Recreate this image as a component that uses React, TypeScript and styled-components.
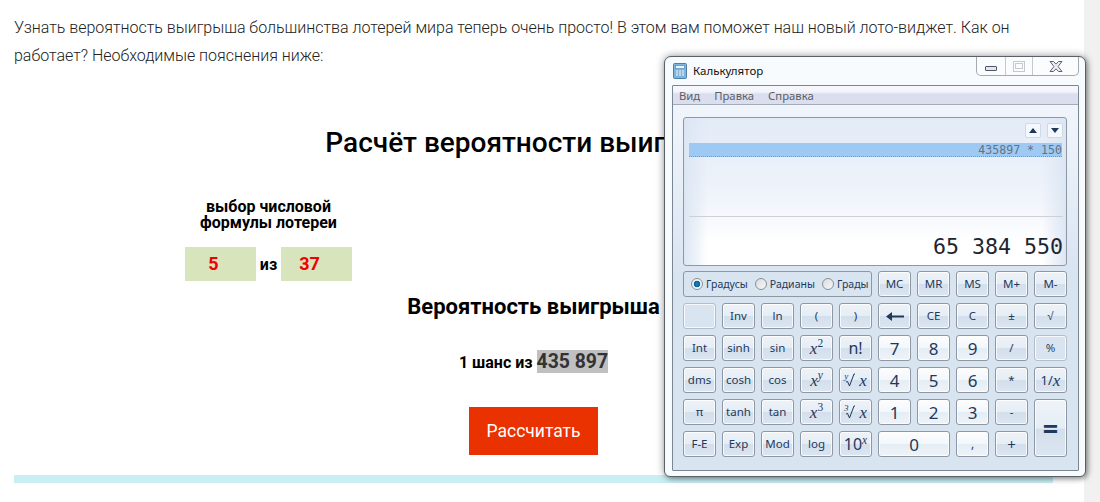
import React from 'react';
import styled, { createGlobalStyle } from 'styled-components';

const GlobalStyle = createGlobalStyle`
  html, body {
    margin: 0;
    padding: 0;
    height: 502px;
    overflow: hidden;
    background: #fff;
  }
  * {
    box-sizing: border-box;
  }
`;

const Shell = styled.div`
  position: relative;
  display: flex;
  width: 1100px;
  height: 502px;
  overflow: hidden;
`;

const Page = styled.main`
  width: 1084px;
  padding: 14px 31px 0 14px;
  font-family: Roboto, sans-serif;
  color: #000;
`;

const Track = styled.div`
  width: 16px;
  background: #f1f1f1;
`;

const Intro = styled.p`
  margin: 0;
  font-size: 16px;
  font-weight: 300;
  letter-spacing: -0.015px;
  line-height: 28px;
  color: #222;
`;

const Heading = styled.h2`
  margin: 57px 0 0;
  font-size: 28px;
  font-weight: 500;
  line-height: 32px;
  text-align: center;
  white-space: nowrap;
`;

const Formula = styled.section`
  margin: 40px 0 0 171px;
  width: 167px;
`;

const FormulaLabel = styled.div`
  font-size: 16px;
  font-weight: 700;
  line-height: 16px;
  text-align: center;
`;

const FormulaRow = styled.div`
  display: flex;
  align-items: center;
  justify-content: space-between;
  margin-top: 16px;
  font-size: 16px;
  font-weight: 700;
`;

const NumberBox = styled.div`
  width: 71px;
  height: 34px;
  padding-right: 14px;
  background: #d7e4bc;
  color: #f00000;
  font-size: 18px;
  font-weight: 700;
  line-height: 33px;
  text-align: center;
`;

const ResultTitle = styled.h3`
  margin: 13px 0 0;
  font-size: 22px;
  font-weight: 700;
  line-height: 26px;
  text-align: center;
  white-space: nowrap;
`;

const Chance = styled.div`
  margin-top: 30px;
  font-size: 16px;
  font-weight: 700;
  line-height: 23px;
  text-align: center;
`;

const ChanceValue = styled.span`
  display: inline-block;
  background: #c0c0c0;
  color: #333;
  font-size: 19.4px;
`;

const SubmitRow = styled.div`
  display: flex;
  justify-content: center;
  margin-top: 33px;
`;

const Submit = styled.button`
  width: 129px;
  height: 48px;
  padding: 0;
  border: 0;
  background: #ea3200;
  color: #fff;
  font-family: Roboto, sans-serif;
  font-size: 17.5px;
`;

const Divider = styled.div`
  height: 8px;
  margin-top: 20px;
  background: #c9eff4;
`;

const Calculator = styled.div`
  position: absolute;
  left: 664px;
  top: 56px;
  width: 422px;
  height: 421px;
  padding: 0 6px 6px 7px;
  border: 1px solid #5a6068;
  border-radius: 7px 7px 6px 6px;
  background: #f8fbfd;
  box-shadow: 0 0 9px rgba(0, 0, 0, 0.4), 2px 2px 4px rgba(0, 0, 0, 0.25);
  font-family: 'Noto Sans', sans-serif;
`;

const TitleBar = styled.div`
  display: flex;
  align-items: flex-start;
  height: 28px;
`;

const AppIcon = styled.svg`
  width: 14px;
  height: 16px;
  margin: 6px 0 0 1px;
`;

const Caption = styled.span`
  margin: 5px 0 0 6px;
  font-size: 11.5px;
  line-height: 17px;
  color: #111;
`;

const WinButtons = styled.div`
  display: flex;
  margin-left: auto;
  height: 19px;
  border: 1px solid #a4aab2;
  border-top: 0;
  border-radius: 0 0 5px 5px;
  background: #fbfcfd;
`;

const WinButton = styled.div<{ $width: number }>`
  display: flex;
  align-items: center;
  justify-content: center;
  width: ${(p) => p.$width}px;
  & + & {
    border-left: 1px solid #c4c8cd;
  }
`;

const MinGlyph = styled.div`
  width: 12px;
  height: 5px;
  margin-top: 4px;
  border: 1px solid #50566a;
  border-radius: 1px;
  background: #e4e7f0;
`;

const MaxGlyph = styled.div`
  display: flex;
  align-items: center;
  justify-content: center;
  width: 12px;
  height: 11px;
  border: 1px solid #c6cacf;
  &::after {
    content: '';
    width: 6px;
    height: 4px;
    border: 1px solid #c6cacf;
  }
`;

const Panel = styled.div`
  display: flex;
  flex-direction: column;
  height: 386px;
  border: 1px solid #7c8692;
  border-radius: 1px;
  background: linear-gradient(180deg, #f0f4fb 18px, #eff4fb 40px, #d9e4f1 190px);
`;

const MenuBar = styled.nav`
  display: flex;
  gap: 14px;
  height: 19px;
  padding: 1px 0 0 6px;
  border-bottom: 1px solid #a3abb6;
  background: linear-gradient(180deg, #f7f8fc 0, #f2f4fa 6px, #dadeee 8px, #dadeee 100%);
  font-size: 11.3px;
  line-height: 17px;
  color: #5a5f66;
`;

const Body = styled.div`
  display: flex;
  flex-direction: column;
  gap: 5px;
  padding: 12px 11px 0 10px;
`;

const Display = styled.div`
  display: flex;
  flex-direction: column;
  height: 149px;
  padding: 5px 3px 0 5px;
  border: 1px solid #8e98a4;
  border-radius: 3px;
  background:
    linear-gradient(90deg, #dce6f3 0, rgba(255, 255, 255, 0) 24px, rgba(255, 255, 255, 0) calc(100% - 24px), #dce6f3 100%),
    linear-gradient(180deg, #e3ebf7 0, #f0f4fb 55%, #fff 85%);
`;

const ScrollArrows = styled.div`
  display: flex;
  justify-content: flex-end;
  gap: 6px;
`;

const ScrollArrow = styled.div`
  display: flex;
  align-items: center;
  justify-content: center;
  width: 16px;
  height: 15px;
  border: 1px solid #cfd8e5;
  border-radius: 2px;
  background: #f5f8fc;
`;

const History = styled.div`
  flex: 0 0 74px;
  margin-top: 5px;
  border-bottom: 1px solid #cdd0d5;
`;

const HistoryLine = styled.div`
  height: 14px;
  margin-right: 1px;
  border-bottom: 1px dotted #7e98b4;
  background: #9dc9f3;
  font-family: 'DejaVu Sans Mono', monospace;
  font-size: 11.6px;
  line-height: 14px;
  color: #667280;
  text-align: right;
`;

const ResultValue = styled.div`
  margin-top: 17px;
  font-family: 'DejaVu Sans Mono', monospace;
  font-size: 21.6px;
  line-height: 26px;
  color: #1d2530;
  text-align: right;
  white-space: pre;
`;

const Keypad = styled.div`
  display: grid;
  grid-template-columns: repeat(10, 33px);
  grid-auto-rows: 26px;
  column-gap: 6px;
  row-gap: 6px;
`;

const RadioGroup = styled.div`
  grid-column: span 5;
  display: flex;
  align-items: center;
  gap: 3px;
  padding-left: 7px;
  border: 1px solid #8e98a4;
  border-radius: 3px;
  font-size: 10.5px;
  color: #1e395b;
`;

const RadioLabel = styled.span`
  margin-right: 4px;
`;

const Radio = styled.span<{ $checked?: boolean }>`
  flex: none;
  width: 12px;
  height: 12px;
  border: 1px solid #8b8f96;
  border-radius: 50%;
  background: ${(p) =>
    p.$checked
      ? 'radial-gradient(circle, #1a86c8 0, #0f5f96 3px, #f0f3f7 3.6px)'
      : 'linear-gradient(135deg, #d9dce0, #f6f7f8)'};
`;

const KeyBase = styled.button<{
  $tone?: 'fn' | 'digit' | 'off';
  $span?: number;
  $tall?: boolean;
  $size?: number;
}>`
  display: flex;
  align-items: center;
  justify-content: center;
  padding: 0;
  border: 1px solid ${(p) => (p.$tone === 'off' ? '#b4bdc8' : '#8e98a4')};
  border-radius: 3px;
  grid-column: span ${(p) => p.$span ?? 1};
  grid-row: span ${(p) => (p.$tall ? 2 : 1)};
  box-shadow: inset 0 0 0 1px rgba(255, 255, 255, 0.75);
  background: ${(p) =>
    p.$tone === 'digit'
      ? 'linear-gradient(180deg, #fcfdfe 0, #f3f7fb 50%, #e5edf5 52%, #eef3f8 100%)'
      : p.$tone === 'off'
        ? '#d9e4f1'
        : 'linear-gradient(180deg, #eef3f9 0, #e6edf5 50%, #d3dfec 52%, #dce6f1 100%)'};
  font-family: 'Noto Sans', sans-serif;
  font-size: ${(p) => p.$size ?? (p.$tone === 'digit' ? 17 : 11.5)}px;
  color: ${(p) => (p.$tone === 'off' ? '#2d4664' : '#1e395b')};
  line-height: 1;
  white-space: nowrap;
`;

const MathText = styled.span`
  font-family: 'Liberation Serif', serif;
  font-size: 17px;
  font-style: italic;
  color: #1e395b;
`;

const Exponent = styled.sup<{ $upright?: boolean }>`
  font-family: 'Liberation Serif', serif;
  font-size: 11.5px;
  font-style: ${(p) => (p.$upright ? 'normal' : 'italic')};
  line-height: 0;
`;

const RootGroup = styled.span`
  display: inline-flex;
  align-items: center;
  gap: 4px;
`;

const RootSign = styled.span`
  display: inline-flex;
  align-items: flex-start;
`;

const RootIndex = styled.span`
  margin-top: -1px;
  font-family: 'Liberation Serif', serif;
  font-size: 9px;
  font-style: italic;
  line-height: 9px;
  color: #1e395b;
`;

const RadicalIcon = styled.svg`
  width: 9px;
  height: 14px;
  margin-left: -2px;
`;

const Equals = styled.span`
  font-size: 27px;
  font-weight: 700;
`;

const Digit: React.FC<{ children: React.ReactNode; span?: number; size?: number }> = ({ children, span, size }) => (
  <KeyBase $tone="digit" $span={span} $size={size}>
    {children}
  </KeyBase>
);

const Key: React.FC<{ children?: React.ReactNode; size?: number }> = ({ children, size }) => (
  <KeyBase $size={size}>{children}</KeyBase>
);

const Power: React.FC<{ base: string; exp: string; upright?: boolean }> = ({ base, exp, upright }) => (
  <MathText>
    {base}
    <Exponent $upright={upright}>{exp}</Exponent>
  </MathText>
);

const Root: React.FC<{ index: string }> = ({ index }) => (
  <RootGroup>
    <RootSign>
      <RootIndex>{index}</RootIndex>
      <RadicalIcon viewBox="0 0 9 14">
        <path d="M0 9l1.500-.5L3.500 13 8 1h1" fill="none" stroke="#1e395b" strokeWidth="1" />
      </RadicalIcon>
    </RootSign>
    <MathText>x</MathText>
  </RootGroup>
);

const CalculatorWindow: React.FC = () => (
  <Calculator>
    <TitleBar>
      <AppIcon viewBox="0 0 14 16">
        <rect x="0.5" y="0.5" width="13" height="15" rx="1" fill="#7fb4dc" stroke="#4d7fa8" />
        <rect x="2.5" y="2.5" width="9" height="3" fill="#e9f4fb" stroke="#4d7fa8" strokeWidth="0.6" />
        <path d="M3 8h2M6 8h2M9 8h2M3 10h2M6 10h2M9 10h2M3 12h2M6 12h2M9 12h2" stroke="#f4f8fb" strokeWidth="1.2" />
      </AppIcon>
      <Caption>Калькулятор</Caption>
      <WinButtons>
        <WinButton $width={28}>
          <MinGlyph />
        </WinButton>
        <WinButton $width={27}>
          <MaxGlyph />
        </WinButton>
        <WinButton $width={46}>
          <svg width="14" height="11" viewBox="0 0 14 11">
            <path
              d="M1 .5h3.500L7 3.200 9.500.5H13L9 5.500l4 5H9.500L7 7.800 4.500 10.500H1l4-5z"
              fill="#eef0f5"
              stroke="#5b6072"
              strokeWidth="1"
            />
          </svg>
        </WinButton>
      </WinButtons>
    </TitleBar>
    <Panel>
      <MenuBar>
        <span>Вид</span>
        <span>Правка</span>
        <span>Справка</span>
      </MenuBar>
      <Body>
        <Display>
          <ScrollArrows>
            <ScrollArrow>
              <svg width="8" height="5" viewBox="0 0 8 5">
                <path d="M4 0l4 5H0z" fill="#1e395b" />
              </svg>
            </ScrollArrow>
            <ScrollArrow>
              <svg width="8" height="5" viewBox="0 0 8 5">
                <path d="M0 0h8L4 5z" fill="#1e395b" />
              </svg>
            </ScrollArrow>
          </ScrollArrows>
          <History>
            <HistoryLine>435897 * 150</HistoryLine>
          </History>
          <ResultValue>65 384 550</ResultValue>
        </Display>
        <Keypad>
          <RadioGroup>
            <Radio $checked />
            <RadioLabel>Градусы</RadioLabel>
            <Radio />
            <RadioLabel>Радианы</RadioLabel>
            <Radio />
            <span>Грады</span>
          </RadioGroup>
          <Key>MC</Key>
          <Key>MR</Key>
          <Key>MS</Key>
          <Key>M+</Key>
          <Key>M-</Key>

          <KeyBase $tone="off" />
          <Key>Inv</Key>
          <Key>ln</Key>
          <Key>(</Key>
          <Key>)</Key>
          <Key>
            <svg width="18" height="9" viewBox="0 0 18 9">
              <path d="M0 4.500L6 0v3.500h12v2H6V9z" fill="#1e395b" />
            </svg>
          </Key>
          <Key>CE</Key>
          <Key>C</Key>
          <Key>±</Key>
          <Key>√</Key>

          <Key>Int</Key>
          <Key>sinh</Key>
          <Key>sin</Key>
          <Key>
            <Power base="x" exp="2" upright />
          </Key>
          <Key size={16}>n!</Key>
          <Digit>7</Digit>
          <Digit>8</Digit>
          <Digit>9</Digit>
          <Key>/</Key>
          <KeyBase $tone="off">%</KeyBase>

          <Key>dms</Key>
          <Key>cosh</Key>
          <Key>cos</Key>
          <Key>
            <Power base="x" exp="y" />
          </Key>
          <Key>
            <Root index="y" />
          </Key>
          <Digit>4</Digit>
          <Digit>5</Digit>
          <Digit>6</Digit>
          <Key>*</Key>
          <Key size={13}>
            1/<MathText>x</MathText>
          </Key>

          <Key>π</Key>
          <Key>tanh</Key>
          <Key>tan</Key>
          <Key>
            <Power base="x" exp="3" upright />
          </Key>
          <Key>
            <Root index="3" />
          </Key>
          <Digit>1</Digit>
          <Digit>2</Digit>
          <Digit>3</Digit>
          <Key>-</Key>
          <KeyBase $tall>
            <Equals>=</Equals>
          </KeyBase>

          <Key>F-E</Key>
          <Key>Exp</Key>
          <Key>Mod</Key>
          <Key>log</Key>
          <Key size={16}>
            <span>
              10
              <Exponent>x</Exponent>
            </span>
          </Key>
          <Digit span={2}>0</Digit>
          <Digit size={12}>,</Digit>
          <Key size={15}>+</Key>
        </Keypad>
      </Body>
    </Panel>
  </Calculator>
);

const App: React.FC = () => (
  <Shell>
    <GlobalStyle />
    <Page>
      <Intro>
        Узнать вероятность выигрыша большинства лотерей мира теперь очень просто! В этом вам поможет наш новый
        лото-виджет. Как он работает? Необходимые пояснения ниже:
      </Intro>
      <Heading>Расчёт вероятности выигрыша</Heading>
      <Formula>
        <FormulaLabel>
          выбор числовой
          <br />
          формулы лотереи
        </FormulaLabel>
        <FormulaRow>
          <NumberBox>5</NumberBox>
          из
          <NumberBox>37</NumberBox>
        </FormulaRow>
      </Formula>
      <ResultTitle>Вероятность выигрыша</ResultTitle>
      <Chance>
        1 шанс из <ChanceValue>435 897</ChanceValue>
      </Chance>
      <SubmitRow>
        <Submit>Рассчитать</Submit>
      </SubmitRow>
      <Divider />
    </Page>
    <Track />
    <CalculatorWindow />
  </Shell>
);

export default App;
